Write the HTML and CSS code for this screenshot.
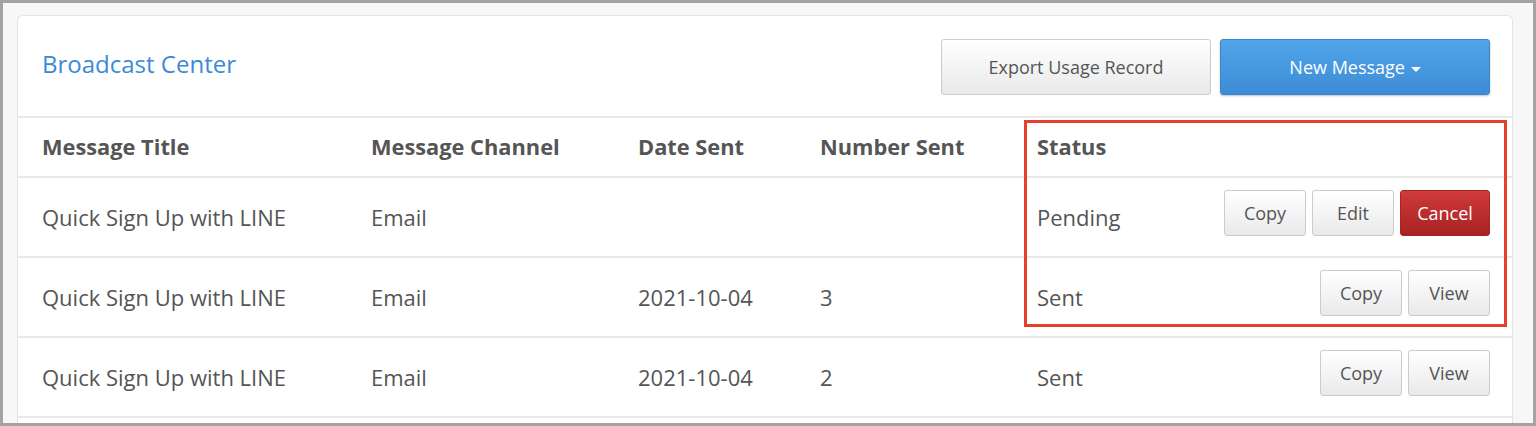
FILE: index.html
```html
<!DOCTYPE html>
<html>
<head>
  <link rel="stylesheet" href="styles.css">
</head>
<body>
  <div class="frame">
    <div class="card">
      <div class="card-header">
        <h1 class="title">Broadcast Center</h1>
        <div class="actions">
          <button class="btn btn-default btn-lg">Export Usage Record</button>
          <button class="btn btn-primary btn-lg">New Message <span class="caret"></span></button>
        </div>
      </div>

      <div class="table">
        <div class="row head">
          <div>Message Title</div>
          <div>Message Channel</div>
          <div>Date Sent</div>
          <div>Number Sent</div>
          <div>Status</div>
        </div>
        <div class="row">
          <div>Quick Sign Up with LINE</div>
          <div>Email</div>
          <div></div>
          <div></div>
          <div class="status">
            <span>Pending</span>
            <span class="btn-group">
              <button class="btn btn-default">Copy</button>
              <button class="btn btn-default">Edit</button>
              <button class="btn btn-danger">Cancel</button>
            </span>
          </div>
        </div>
        <div class="row">
          <div>Quick Sign Up with LINE</div>
          <div>Email</div>
          <div>2021-10-04</div>
          <div>3</div>
          <div class="status">
            <span>Sent</span>
            <span class="btn-group">
              <button class="btn btn-default">Copy</button>
              <button class="btn btn-default">View</button>
            </span>
          </div>
        </div>
        <div class="row">
          <div>Quick Sign Up with LINE</div>
          <div>Email</div>
          <div>2021-10-04</div>
          <div>2</div>
          <div class="status">
            <span>Sent</span>
            <span class="btn-group">
              <button class="btn btn-default">Copy</button>
              <button class="btn btn-default">View</button>
            </span>
          </div>
        </div>
      </div>

      <div class="highlight"></div>
    </div>
  </div>
</body>
</html>
```

FILE: styles.css
```css
html,
body {
  margin: 0;
  padding: 0;
  height: 100%;
  overflow: hidden;
}

body {
  font-family: "Open Sans", "Liberation Sans", sans-serif;
  color: #555555;
  background-color: #a3a3a3;
}

.frame {
  box-sizing: border-box;
  margin: 3px 3px 0 3px;
  height: 420px;
  padding: 12px 20px 0 14px;
  background-color: #f7f7f7;
  overflow: hidden;
}

.card {
  position: relative;
  background-color: #ffffff;
  border: 1px solid #e3e3e3;
  border-bottom: none;
  border-radius: 6px 6px 0 0;
  height: 420px;
}

.card-header {
  display: flex;
  justify-content: space-between;
  align-items: center;
  height: 100px;
  padding: 0 22px 0 24px;
  border-bottom: 2px solid #e8e8e8;
}

.title {
  margin: 0 0 6px 0;
  font-size: 24px;
  font-weight: normal;
  color: #3a8ad8;
}

.actions {
  display: flex;
  gap: 9px;
  margin-top: 2px;
}

.btn {
  font-family: "Open Sans", "Liberation Sans", sans-serif;
  font-size: 18px;
  color: #555555;
  border: 1px solid #cccccc;
  border-radius: 3px;
  background: linear-gradient(#ffffff, #e9e9e9);
  padding: 0;
  cursor: pointer;
}

.btn-lg {
  height: 56px;
  width: 270px;
}

.btn-primary {
  color: #ffffff;
  border-color: #3a86cc;
  background: linear-gradient(#4fa5ea, #3d8cd5);
  box-shadow: 0 1px 2px rgba(0, 0, 0, 0.25);
}

.caret {
  display: inline-block;
  width: 0;
  height: 0;
  margin-left: 1px;
  vertical-align: middle;
  border-top: 5px solid #ffffff;
  border-left: 5px solid transparent;
  border-right: 5px solid transparent;
}

.table {
  display: flex;
  flex-direction: column;
}

.row {
  display: grid;
  grid-template-columns: 329px 267px 182px 217px 1fr;
  align-items: center;
  height: 78px;
  padding: 0 22px 0 24px;
  border-bottom: 2px solid #e8e8e8;
  font-size: 22px;
}

.row.head {
  height: 58px;
  font-weight: bold;
  font-size: 21.8px;
  padding-bottom: 2px;
  height: 56px;
}

.status {
  display: flex;
  justify-content: space-between;
  align-items: center;
}

.btn-group {
  display: flex;
  gap: 6px;
  margin-bottom: 8px;
}

.btn-group .btn {
  height: 46px;
  width: 82px;
}

.btn-danger {
  color: #ffffff;
  border-color: #a82424;
  background: linear-gradient(#d03a3a, #a72323);
  width: 90px !important;
}

.highlight {
  position: absolute;
  left: 1006px;
  top: 104px;
  width: 477px;
  height: 201px;
  border: 3px solid #e3412b;
}
```
